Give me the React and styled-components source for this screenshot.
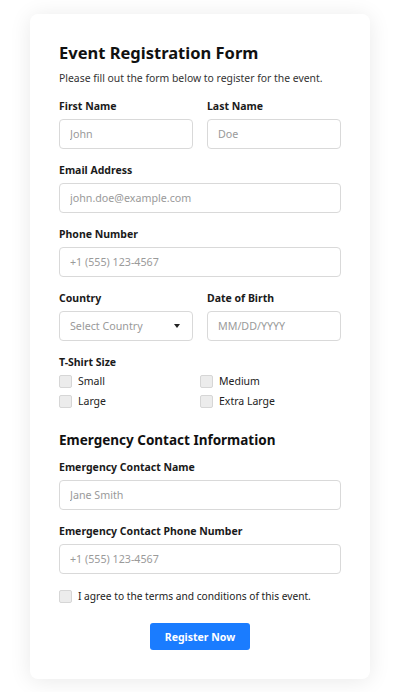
import styled, { createGlobalStyle } from "styled-components";

const GlobalStyle = createGlobalStyle`
  * { box-sizing: border-box; }
  body {
    margin: 0;
    background: #fff;
    font-family: "Noto Sans", "Open Sans", sans-serif;
    color: #222;
  }
`;

const Page = styled.div`
  padding: 14px 30px 14px;
`;

const Card = styled.form`
  background: #fff;
  border-radius: 8px;
  box-shadow: 0 2px 22px rgba(0, 0, 0, 0.09);
  padding: 28px 29px 29px;
  display: flex;
  flex-direction: column;
`;

const Title = styled.h1`
  margin: 0;
  font-size: 16.5px;
  line-height: 22px;
  font-weight: 700;
  color: #111;
`;

const Subtitle = styled.p`
  margin: 7px 0 14px;
  font-size: 10.4px;
  line-height: 14px;
  color: #333;
`;

const SectionTitle = styled.h2`
  margin: 22px 0 10px;
  font-size: 13.5px;
  line-height: 20px;
  font-weight: 700;
  color: #111;
`;

const Row = styled.div`
  display: grid;
  grid-template-columns: minmax(0, 1fr) minmax(0, 1fr);
  column-gap: 14px;
`;

const Field = styled.div`
  display: flex;
  flex-direction: column;
  min-width: 0;
  margin-bottom: 14px;
`;

const Label = styled.label`
  font-size: 10.5px;
  line-height: 14px;
  font-weight: 700;
  color: #1a1a1a;
  margin-bottom: 6px;
`;

const Input = styled.input`
  width: 100%;
  height: 30px;
  border: 1px solid #d9d9d9;
  border-radius: 4px;
  padding: 0 10px;
  font-family: inherit;
  font-size: 10.7px;
  color: #333;
  background: #fff;
  &::placeholder { color: #9a9a9a; }
`;

const SelectBox = styled.div`
  height: 30px;
  border: 1px solid #d9d9d9;
  border-radius: 4px;
  padding: 0 12px 0 10px;
  display: flex;
  align-items: center;
  justify-content: space-between;
  font-size: 10.7px;
  color: #9a9a9a;
  white-space: nowrap;
`;

const Caret = styled.span`
  width: 0;
  height: 0;
  border-left: 3.5px solid transparent;
  border-right: 3.5px solid transparent;
  border-top: 4px solid #222;
`;

const CheckGrid = styled.div`
  display: grid;
  grid-template-columns: minmax(0, 1fr) minmax(0, 1fr);
  row-gap: 7px;
`;

const CheckItem = styled.label`
  display: flex;
  align-items: center;
  gap: 6px;
  font-size: ${({ $small }) => ($small ? "10.2px" : "10.5px")};
  line-height: 13px;
  color: #222;
`;

const Box = styled.span`
  width: 13px;
  height: 13px;
  border-radius: 2px;
  border: 1px solid #d6d6d6;
  background: #ececec;
  flex-shrink: 0;
`;

const Agree = styled(CheckItem)`
  margin-top: 2px;
`;

const Button = styled.button`
  align-self: center;
  margin-top: 20px;
  width: 100px;
  height: 27px;
  border: none;
  border-radius: 3px;
  background: #1a7cff;
  color: #fff;
  font-family: inherit;
  font-size: 10.5px;
  font-weight: 700;
`;

const sizes = ["Small", "Medium", "Large", "Extra Large"];

export default function App() {
  return (
    <>
      <GlobalStyle />
      <Page>
        <Card onSubmit={(e) => e.preventDefault()}>
          <Title>Event Registration Form</Title>
          <Subtitle>Please fill out the form below to register for the event.</Subtitle>
          <Row>
            <Field>
              <Label>First Name</Label>
              <Input placeholder="John" />
            </Field>
            <Field>
              <Label>Last Name</Label>
              <Input placeholder="Doe" />
            </Field>
          </Row>
          <Field>
            <Label>Email Address</Label>
            <Input placeholder="john.doe@example.com" />
          </Field>
          <Field>
            <Label>Phone Number</Label>
            <Input placeholder="+1 (555) 123-4567" />
          </Field>
          <Row>
            <Field>
              <Label>Country</Label>
              <SelectBox>
                Select Country
                <Caret />
              </SelectBox>
            </Field>
            <Field>
              <Label>Date of Birth</Label>
              <Input placeholder="MM/DD/YYYY" />
            </Field>
          </Row>
          <Label>T-Shirt Size</Label>
          <CheckGrid>
            {sizes.map((s) => (
              <CheckItem key={s}>
                <Box />
                {s}
              </CheckItem>
            ))}
          </CheckGrid>
          <SectionTitle>Emergency Contact Information</SectionTitle>
          <Field>
            <Label>Emergency Contact Name</Label>
            <Input placeholder="Jane Smith" />
          </Field>
          <Field>
            <Label>Emergency Contact Phone Number</Label>
            <Input placeholder="+1 (555) 123-4567" />
          </Field>
          <Agree $small>
            <Box />
            I agree to the terms and conditions of this event.
          </Agree>
          <Button type="submit">Register Now</Button>
        </Card>
      </Page>
    </>
  );
}
